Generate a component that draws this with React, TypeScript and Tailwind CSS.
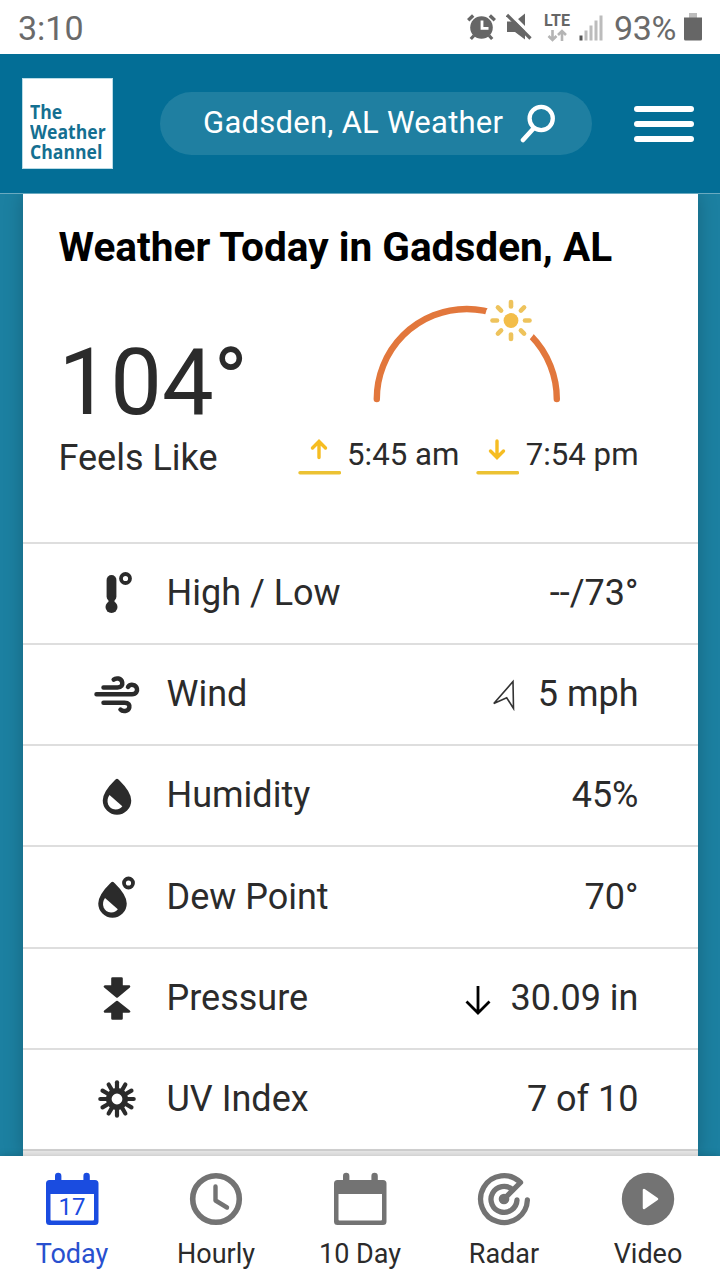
import type { ReactNode } from "react";
import clsx from "clsx";

function AlarmIcon() {
  return (
    <svg className="h-[28px] w-[30px]" viewBox="0 0 30 28" fill="none">
      <circle cx="15.5" cy="14.5" r="11.3" fill="#666" />
      <path d="M8 22.5 4.8 26M23 22.5l3.2 3.5" stroke="#666" strokeWidth="3.2" />
      <path d="m2.2 7.3 5-4.8M28.8 7.3l-5-4.8" stroke="#666" strokeWidth="3.4" />
      <path d="M16 7.5v7.8h6.5" stroke="#fff" strokeWidth="2.8" />
    </svg>
  );
}

function MuteIcon() {
  return (
    <svg className="h-[28px] w-[26px]" viewBox="0 0 26 28">
      <path d="M1 8.5h8L19 0.5v26L9 19H1z" fill="#666" />
      <path d="m2.5-1 26 26" stroke="#fff" strokeWidth="3.5" />
      <path d="m1 2 23.5 23.5" stroke="#666" strokeWidth="3.2" />
    </svg>
  );
}

function LteIcon() {
  return (
    <div className="flex w-[28px] flex-col items-center">
      <span className="font-bold text-[16px] text-[#666] leading-[16px]">LTE</span>
      <svg className="h-[13px] w-[20px]" viewBox="0 0 20 13" fill="none" stroke="#b5b5b5" strokeWidth="2.6">
        <path d="M5.5 1v9.5M1.5 7l4 4 4-4M15 12V2.5M11 6l4-4 4 4" />
      </svg>
    </div>
  );
}

function SignalIcon() {
  return (
    <svg className="h-[26px] w-[24px]" viewBox="0 0 24 26" fill="#bcbcbc">
      <path d="M0.5 20.5h3v5h-3z" fill="#555" />
      <path d="M5.5 15.5h3v10h-3zM10.5 10.5h3v15h-3zM15.5 5.5h3v20h-3zM20.5.5h3v25h-3z" />
    </svg>
  );
}

function StatusBar() {
  return (
    <div className="flex h-[54px] items-center bg-white pr-[18px] pl-[18px] text-[#6a6a6a]">
      <span className="flex-1 pt-[2px] text-[34px] leading-[52px]">3:10</span>
      <AlarmIcon />
      <div className="mr-[11px] ml-[10px]">
        <MuteIcon />
      </div>
      <LteIcon />
      <div className="mt-[2px] mr-[11px] ml-[8px]">
        <SignalIcon />
      </div>
      <span className="w-[64px] whitespace-nowrap pt-[2px] text-[34px] leading-[52px] tracking-[-0.4px]">93%</span>
      <svg className="ml-[6px] h-[28px] w-[18px]" viewBox="0 0 18 28">
        <path d="M5 0h8v5H5z" fill="#bcbcbc" />
        <path d="M0 4.5h18V26a1.5 1.5 0 0 1-1.5 1.5h-15A1.5 1.5 0 0 1 0 26z" fill="#666" />
      </svg>
    </div>
  );
}

function Header() {
  return (
    <header className="flex h-[140px] items-center border-[#6aaac0] border-b bg-[#036e96] pr-[26px] pl-[22px]">
      <div className="flex size-[91px] flex-col justify-end border border-[#b9dbe6] bg-white pb-[6px] pl-[7px] font-['Open_Sans'] font-bold text-[#146f91] text-[20px] leading-[20px]">
        <span className="origin-left scale-x-[0.88]">The</span>
        <span className="origin-left scale-x-[0.88]">Weather</span>
        <span className="origin-left scale-x-[0.88]">Channel</span>
      </div>
      <div className="ml-[47px] flex h-[63px] w-[432px] items-center rounded-full bg-[#1f7fa1] pl-[43px] text-white">
        <span className="w-[317px] whitespace-nowrap pb-[1px] text-[31px] tracking-[0.26px]">Gadsden, AL Weather</span>
        <svg className="h-[39px] w-[36px]" viewBox="0 0 36 39" fill="none" stroke="#fff" strokeLinecap="round">
          <circle cx="21.2" cy="14.5" r="11.6" strokeWidth="4.3" />
          <path d="M13.5 24.5 3 36" strokeWidth="4.6" />
        </svg>
      </div>
      <div className="ml-auto flex w-[60px] flex-col gap-[9px]">
        <span className="h-[6px] rounded-full bg-white" />
        <span className="h-[6px] rounded-full bg-white" />
        <span className="h-[6px] rounded-full bg-white" />
      </div>
    </header>
  );
}

const RAYS = [0, 45, 90, 135, 180, 225, 270, 315];

function SunArc() {
  return (
    <svg className="h-[110px] w-[190px]" viewBox="372 296 190 110" fill="none" strokeLinecap="round">
      <path d="M376.8 399a90 90 0 0 1 180 0" stroke="#e2773c" strokeWidth="6.4" />
      <circle cx="511" cy="320.5" r="26.5" fill="#fff" />
      <circle cx="511" cy="320.5" r="7.4" fill="#f3bd48" />
      {RAYS.map((angle) => (
        <path
          d="M511 306.5v-4.5"
          key={angle}
          stroke="#eec35c"
          strokeWidth="4.6"
          transform={`rotate(${angle} 511 320.5)`}
        />
      ))}
    </svg>
  );
}

function SunTime({ rising = false, time }: { rising?: boolean; time: string }) {
  return (
    <div className="flex items-center">
      <svg className="mr-[6.5px] h-[38px] w-[43px]" viewBox="0 0 43 38" fill="none" strokeLinecap="round">
        <path
          d={rising ? "M21 19.5V4M14.5 10l6.5-6.5 6.5 6.5" : "M21 3v16M14.5 13l6.5 6.5 6.5-6.5"}
          stroke="#f6bd22"
          strokeWidth="3.4"
        />
        <path d="M2 34.7h39.5" stroke="#ecc233" strokeWidth="3.4" />
      </svg>
      <span className="whitespace-nowrap pb-[5px] text-[31.2px] leading-[33px]">{time}</span>
    </div>
  );
}

function TodaySummary() {
  return (
    <section className="h-[347.5px] px-[36px] pt-[31px]">
      <h1 className="whitespace-nowrap font-bold text-[40.6px] text-black leading-[44px]">
        Weather Today in Gadsden, AL
      </h1>
      <div className="flex justify-between">
        <div className="pt-[60px]">
          <div className="text-[92px] leading-[108px]">104°</div>
          <div className="mt-[1px] text-[36px] leading-[40px]">Feels Like</div>
        </div>
        <div className="mr-[23px] pt-[27px]">
          <div className="ml-[74px]">
            <SunArc />
          </div>
          <div className="mt-[32px] flex gap-[17px]">
            <SunTime rising time="5:45 am" />
            <SunTime time="7:54 pm" />
          </div>
        </div>
      </div>
    </section>
  );
}

function RowIcon({ children }: { children: ReactNode }) {
  return (
    <svg
      className="mr-[25px] size-[50px]"
      viewBox="0 0 50 50"
      fill="none"
      stroke="#2b2b2b"
      strokeLinecap="round"
      strokeLinejoin="round"
    >
      {children}
    </svg>
  );
}

function Drop() {
  return (
    <>
      <path
        d="M25 9.5C21.5 13 12.5 21 12.5 29.5a12.5 12.5 0 0 0 25 0C37.5 21 28.5 13 25 9.5Z"
        fill="#2b2b2b"
        strokeWidth="3.5"
      />
      <path d="M17.5 24c-4.200 5.500-1.500 14.500 6 14.500 3.500 0 5.500-1.200 6.800-3.200Z" fill="#fff" stroke="none" />
    </>
  );
}

const ROWS: { icon: ReactNode; label: string; marker?: ReactNode; value: string }[] = [
  {
    icon: (
      <>
        <path d="M19.5 12v16.5" strokeWidth="9.8" />
        <circle cx="19.5" cy="39" r="6" fill="#2b2b2b" stroke="none" />
        <path d="M19.5 30v7" strokeWidth="6" />
        <circle cx="33.5" cy="10.5" r="4.5" strokeWidth="3.8" />
      </>
    ),
    label: "High / Low",
    value: "--/73°",
  },
  {
    icon: (
      <path
        d="M11.5 18.5h14c4 0 5.2-2.5 4.7-5.2-.8-4.3-6.3-4.8-8.5-2.6M4.5 25.3H40c4.3 0 5.5-3.5 4.9-5.8-1-4.2-6.7-4.8-8.9-1.500M11.5 33.7h21c4.3 0 5.3 2.5 4.8 4.7-1 4.1-6.6 4.6-8.8 2.2"
        strokeWidth="4.5"
      />
    ),
    label: "Wind",
    marker: (
      <svg className="mr-[22px] h-[34px] w-[26px]" viewBox="0 0 26 34" fill="none">
        <path d="M23 4.5 3.8 26.5l12.9-5.7 6.8 10.7Z" stroke="#333" strokeWidth="1.6" />
      </svg>
    ),
    value: "5 mph",
  },
  { icon: <Drop />, label: "Humidity", value: "45%" },
  {
    icon: (
      <>
        <g transform="translate(-4.5 2)">
          <Drop />
        </g>
        <circle cx="36.5" cy="11" r="4.5" strokeWidth="3.8" />
      </>
    ),
    label: "Dew Point",
    value: "70°",
  },
  {
    icon: (
      <path
        d="M20.5 5.500h9v8H37L25 23.5l-12-10h7.500ZM25 29l12 9.500h-7.500V45.500h-9V38.500H13Z"
        fill="#2b2b2b"
        strokeWidth="2.6"
      />
    ),
    label: "Pressure",
    marker: (
      <svg className="mt-[3px] mr-[19px] h-[32px] w-[28px]" viewBox="0 0 28 32" fill="none">
        <path d="M14 2v26M2.5 17.5 14 29l11.5-11.5" stroke="#000" strokeWidth="2.8" />
      </svg>
    ),
    value: "30.09 in",
  },
  {
    icon: (
      <>
        <circle cx="25" cy="25" r="8.2" strokeWidth="5.600" />
        {[0, 30, 60, 90, 120, 150, 180, 210, 240, 270, 300, 330].map((angle) => (
          <path d="M25 15V8.3" key={angle} strokeWidth="4.2" transform={`rotate(${angle} 25 25)`} />
        ))}
      </>
    ),
    label: "UV Index",
    value: "7 of 10",
  },
];

function CalendarIcon({ day }: { day?: string }) {
  return (
    <div className="relative">
      <svg className="size-[54px]" viewBox="0 0 54 54" fill="currentColor">
        <path
          d="M10 4a3.2 3.2 0 0 1 6.4 0v4h22V4a3.2 3.2 0 0 1 6.4 0v4H50a3.5 3.5 0 0 1 3.5 3.5v38A3.5 3.5 0 0 1 50 53H4.5A3.5 3.5 0 0 1 1 49.5v-38A3.5 3.5 0 0 1 4.5 8H10ZM5.5 22v25.5q0 1 1 1h41.5q1 0 1-1V22Z"
          fillRule="evenodd"
        />
      </svg>
      {day && (
        <span className="absolute inset-x-0 top-[21px] text-center text-[24px] leading-[28px]">{day}</span>
      )}
    </div>
  );
}

const TABS: { icon: ReactNode; label: string }[] = [
  { icon: <CalendarIcon day="17" />, label: "Today" },
  {
    icon: (
      <svg className="size-[54px]" viewBox="0 0 54 54" fill="none" stroke="currentColor" strokeLinecap="round">
        <circle cx="27" cy="27" r="23.3" strokeWidth="5.6" />
        <path d="M26.5 14.5v14l11.5 7" strokeLinejoin="round" strokeWidth="4.4" />
      </svg>
    ),
    label: "Hourly",
  },
  { icon: <CalendarIcon />, label: "10 Day" },
  {
    icon: (
      <svg
        className="size-[54px]"
        viewBox="0 0 54 54"
        fill="none"
        stroke="currentColor"
        strokeLinecap="round"
        strokeLinejoin="round"
      >
        <path d="M50.4 28A23.4 23.4 0 1 1 43.5 10.500L27 27" strokeWidth="5.3" />
        <path d="M40 28A13 13 0 1 1 35.5 17.5" strokeWidth="5.3" />
        <circle cx="27" cy="27" r="5.3" fill="currentColor" stroke="none" />
      </svg>
    ),
    label: "Radar",
  },
  {
    icon: (
      <svg className="size-[54px]" viewBox="0 0 54 54">
        <circle cx="27" cy="27" r="26.2" fill="currentColor" />
        <path d="M23 18v18l13-9Z" fill="#fff" stroke="#fff" strokeLinejoin="round" strokeWidth="2.5" />
      </svg>
    ),
    label: "Video",
  },
];

function BottomNav() {
  return (
    <nav className="relative grid h-[124px] grid-cols-5 bg-white pt-[16px] shadow-[0_0_8px_rgba(0,0,0,0.2)]">
      {TABS.map((tab, index) => (
        <div
          className={clsx("flex flex-col items-center", index === 0 ? "text-[#1a4ce0]" : "text-[#737373]")}
          key={tab.label}
        >
          {tab.icon}
          <span
            className={clsx(
              "mt-[12px] whitespace-nowrap text-[27px] leading-[32px]",
              index === 0 ? "text-[#2850cf]" : "text-[#2b2b2b]",
            )}
          >
            {tab.label}
          </span>
        </div>
      ))}
    </nav>
  );
}

export default function App() {
  return (
    <div className="flex h-[1280px] w-[720px] flex-col overflow-hidden bg-white font-[Roboto,sans-serif] text-[#2b2b2b]">
      <StatusBar />
      <Header />
      <main className="h-[962px] overflow-hidden bg-[#1c80a1] px-[22.5px]">
        <div className="h-full bg-white shadow-[0_0_18px_rgba(0,0,0,0.22)]">
          <TodaySummary />
          {ROWS.map((row) => (
            <div
              className="flex h-[101.25px] items-center border-[#dedede] border-t-2 pr-[59px] pl-[69px] text-[36px]"
              key={row.label}
            >
              <RowIcon>{row.icon}</RowIcon>
              <span className="flex-1 pb-[0.5px]">{row.label}</span>
              {row.marker}
              <span className="pb-[0.5px]">{row.value}</span>
            </div>
          ))}
          <div className="h-[8px] border-[#d0d0d0] border-t-2 bg-[#eaeaea]" />
        </div>
      </main>
      <BottomNav />
    </div>
  );
}
